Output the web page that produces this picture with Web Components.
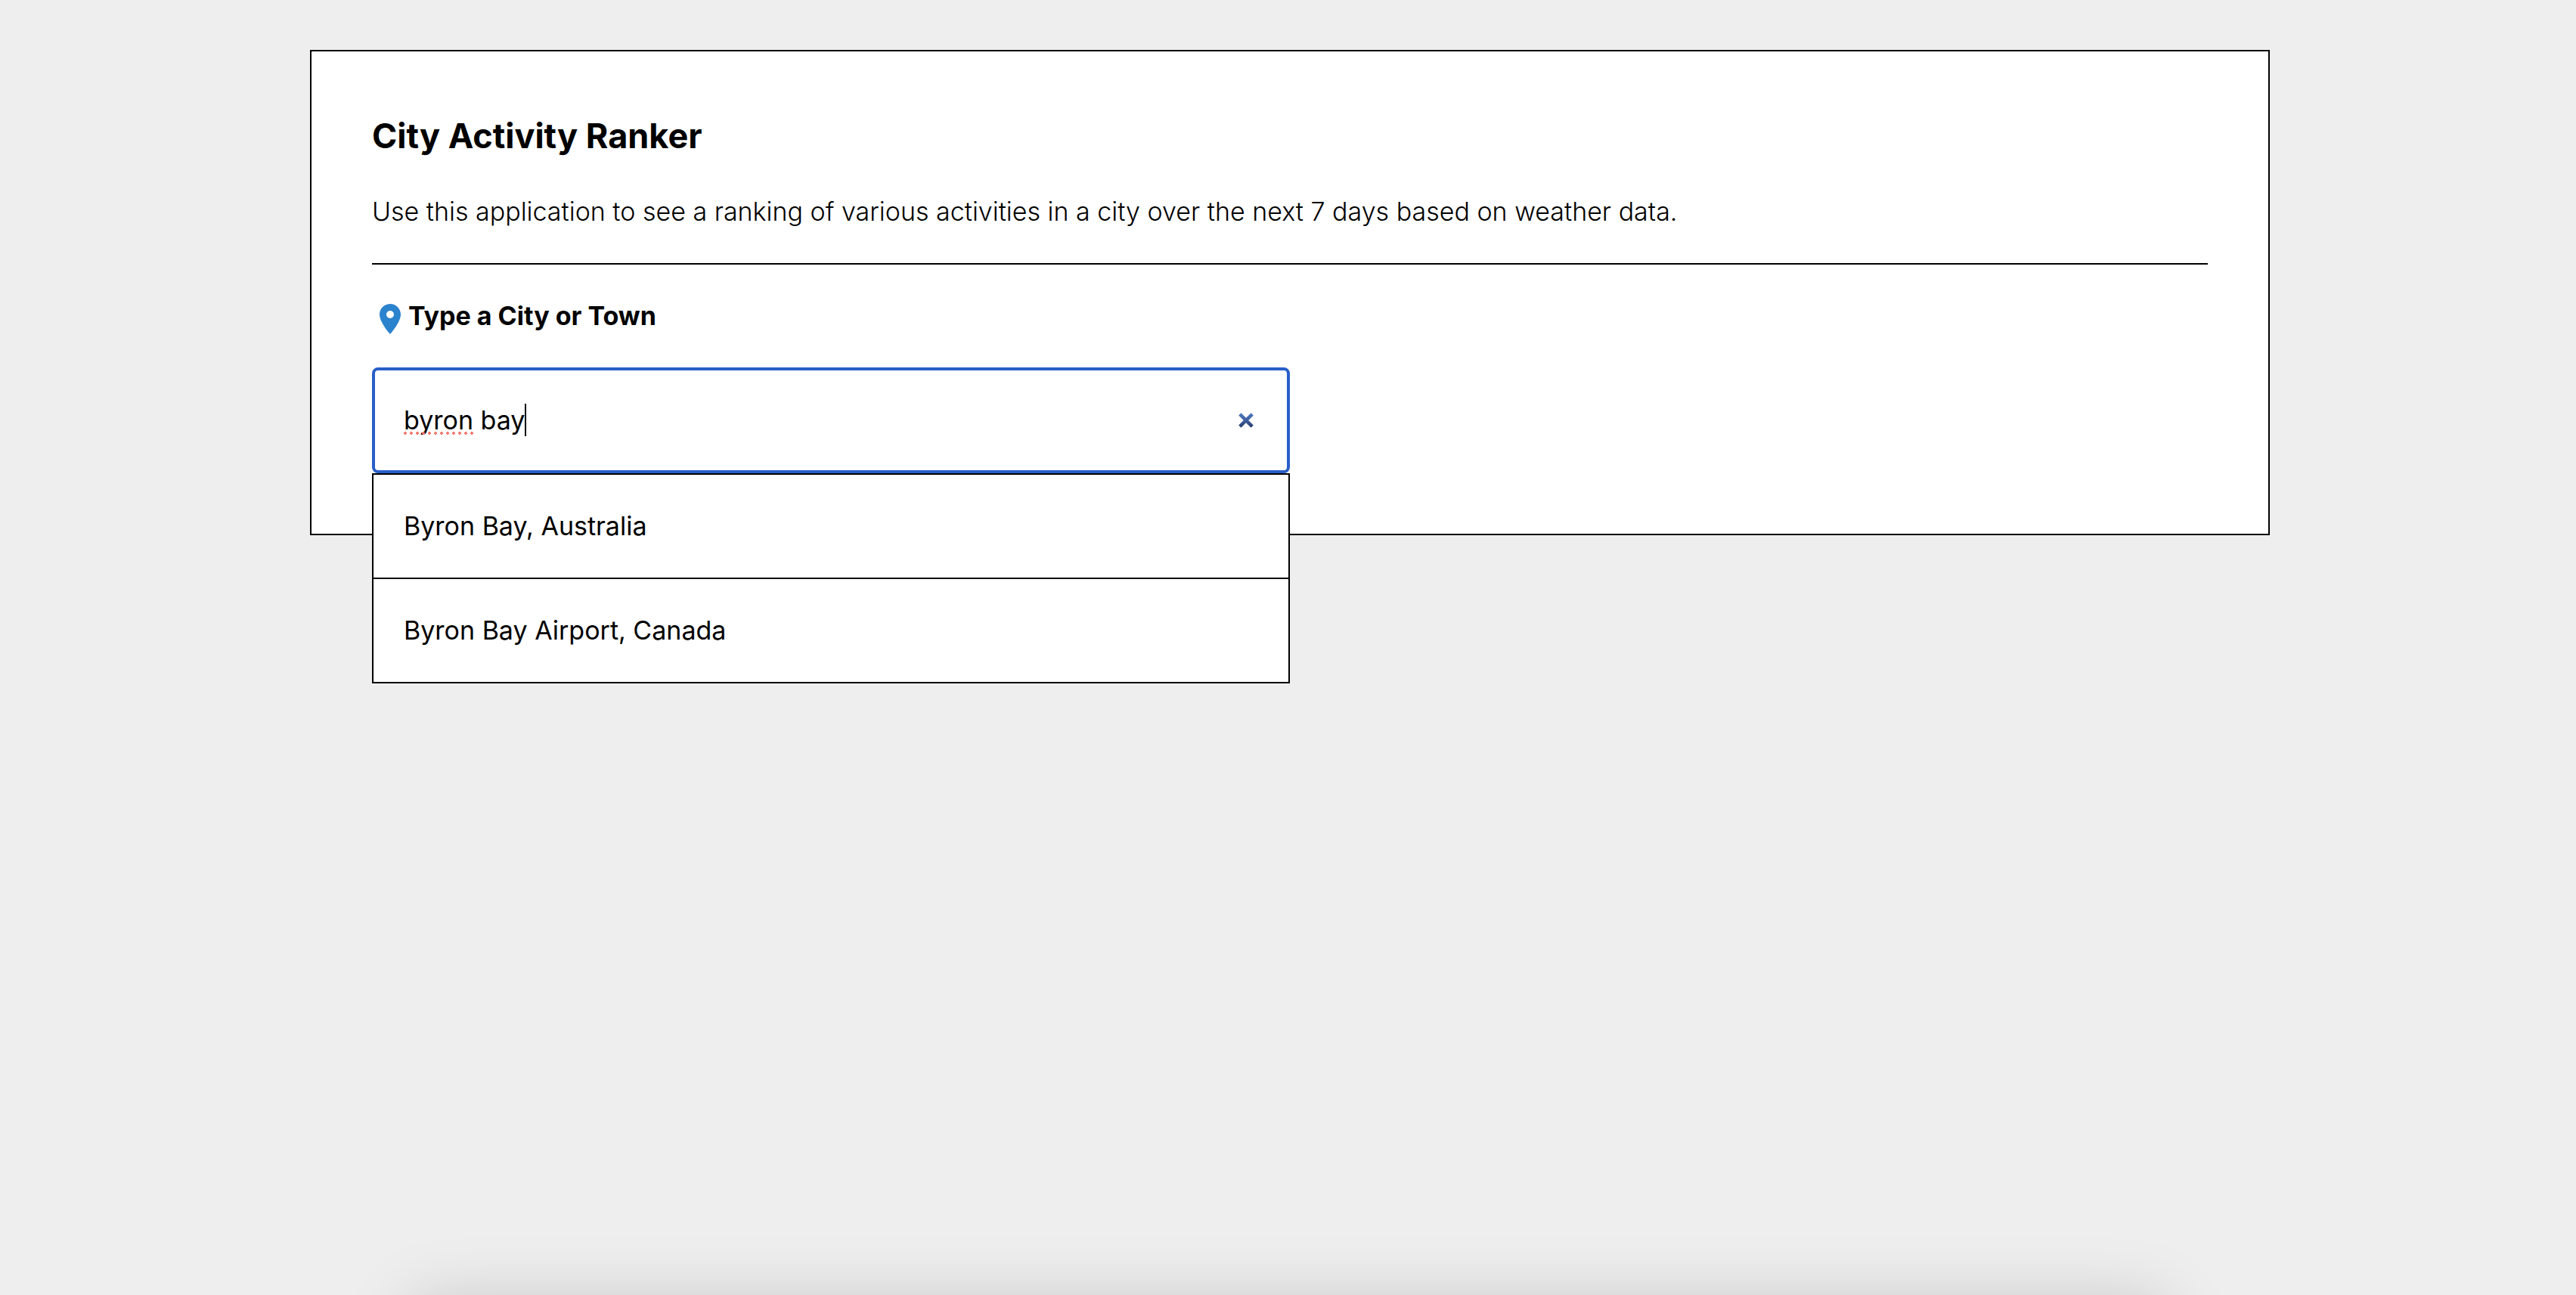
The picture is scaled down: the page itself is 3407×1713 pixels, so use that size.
<!DOCTYPE html>
<html lang="en">
<head>
<meta charset="utf-8">
<title>City Activity Ranker</title>
<style>
  :root {
    --ink: #000;
    --surface: #fff;
    --page: #eee;
    --accent: #285ec8;
    --pin: #2b82cd;
    --space: 40px;
    --line: 56px;
    --text: 34px;
  }
  body {
    margin: 0;
    min-height: 100vh;
    background: var(--page);
    color: var(--ink);
    font-family: Inter, "Liberation Sans", sans-serif;
    font-size: var(--text);
    line-height: var(--line);
  }
</style>
</head>
<body>
<ranker-page>
  <ranker-card heading="City Activity Ranker">
    <span slot="intro">Use this application to see a ranking of various activities in a city over the next 7 days based on weather data.</span>
    <city-search label="Type a City or Town" value="byron bay" unknown="byron">
      <city-option>Byron Bay, Australia</city-option>
      <city-option>Byron Bay Airport, Canada</city-option>
    </city-search>
  </ranker-card>
</ranker-page>

<script>
class RankerPage extends HTMLElement {
  constructor() {
    super();
    this.attachShadow({ mode: 'open' }).innerHTML = `
      <style>
        :host { display: block; box-sizing: border-box; min-height: 100vh; padding: 66px 0 var(--space) 5px; }
        main { display: block; max-width: 2592px; margin: 0 auto; }
        .shade {
          position: fixed; top: 100%; left: 16%; right: 16%; height: 200px;
          box-shadow: 0 12px 90px rgba(0, 0, 0, .18);
          pointer-events: none;
        }
      </style>
      <main><slot></slot></main>
      <div class="shade"></div>`;
  }
}

class RankerCard extends HTMLElement {
  constructor() {
    super();
    this.attachShadow({ mode: 'open' }).innerHTML = `
      <style>
        :host {
          display: flex; flex-direction: column; gap: var(--space);
          box-sizing: border-box; padding: 80px;
          background: var(--surface); border: 2px solid var(--ink);
        }
        h1 { margin: 0; font-size: 45px; line-height: 64px; font-weight: 700; }
        p { margin: 0; font-weight: 300; }
        hr { width: 100%; margin: 0; border: 0; border-top: 2px solid var(--ink); }
      </style>
      <h1></h1>
      <p><slot name="intro"></slot></p>
      <hr>
      <slot></slot>`;
    this.shadowRoot.querySelector('h1').textContent = this.getAttribute('heading');
  }
}

class MapPin extends HTMLElement {
  constructor() {
    super();
    this.attachShadow({ mode: 'open' }).innerHTML = `
      <style>
        :host { display: block; width: 48px; height: 48px; color: var(--pin); }
        svg { display: block; width: 100%; height: 100%; }
      </style>
      <svg viewBox="0 0 24 24" fill="currentColor" aria-hidden="true">
        <path d="M12 2C8.13 2 5 5.13 5 9c0 5.25 7 13 7 13s7-7.75 7-13c0-3.87-3.13-7-7-7zm0 9.5a2.5 2.5 0 0 1 0-5 2.5 2.5 0 0 1 0 5z"/>
      </svg>`;
  }
}

class CitySearch extends HTMLElement {
  constructor() {
    super();
    this.attachShadow({ mode: 'open' }).innerHTML = `
      <style>
        :host { display: flex; flex-direction: column; gap: var(--space); }
        .label { display: flex; align-items: flex-end; font-weight: 700; }
        .combo { position: relative; width: 50%; }
        .field {
          display: flex; align-items: center; box-sizing: border-box;
          height: 140px; padding: 0 38px;
          background: var(--surface); border: 4px solid var(--accent); border-radius: 8px;
        }
        .entry { position: relative; flex: 1; display: flex; }
        input {
          flex: 1; min-width: 0; height: var(--line); padding: 0; border: 0; outline: 0;
          background: none; color: inherit; font: inherit; caret-color: transparent;
        }
        .typo {
          position: absolute; left: 0; top: 43px; height: 4px;
          background: radial-gradient(circle at 2px 2px, #f4776c 2px, transparent 2px) 0 0 / 8px 4px;
        }
        .caret { position: absolute; top: 6px; width: 2px; height: 43px; background: var(--ink); }
        button {
          display: flex; align-items: center; justify-content: center;
          width: 32px; height: 32px; padding: 0; border: 0; background: none;
        }
        button svg { width: 20px; height: 20px; }
        .options {
          position: absolute; top: 100%; left: 0; right: 0; z-index: 1;
          background: var(--surface); border: 2px solid var(--ink);
        }
      </style>
      <label class="label" for="city"><map-pin></map-pin><span></span></label>
      <div class="combo">
        <div class="field">
          <div class="entry">
            <input id="city" type="text" autocomplete="off" spellcheck="false">
            <i class="typo"></i><i class="caret"></i>
          </div>
          <button type="button" aria-label="Clear">
            <svg viewBox="0 0 20 20" aria-hidden="true">
              <defs><linearGradient id="g" gradientUnits="userSpaceOnUse" x1="0" y1="0" x2="0" y2="20">
                <stop offset="0" stop-color="#4d7cc4"/><stop offset=".5" stop-color="#3f5f9f"/><stop offset="1" stop-color="#273a66"/>
              </linearGradient></defs>
              <path d="M1.8 1.8l16.4 16.4M18.2 1.8l-16.4 16.4" stroke="url(#g)" stroke-width="4.6"/>
            </svg>
          </button>
        </div>
        <div class="options" role="listbox"><slot></slot></div>
      </div>`;
    const root = this.shadowRoot;
    const value = this.getAttribute('value');
    root.querySelector('.label span').textContent = this.getAttribute('label');
    const input = root.querySelector('input');
    input.value = value;
    root.querySelector('button').addEventListener('click', () => {
      input.value = '';
      this.mark('');
    });
    input.addEventListener('input', () => this.mark(input.value));
    this.mark(value);
  }

  /* Place the caret after the typed text and dot the unknown word. */
  mark(value) {
    const pen = document.createElement('canvas').getContext('2d');
    pen.font = '34px Inter, "Liberation Sans", sans-serif';
    const word = this.getAttribute('unknown');
    const shown = value.startsWith(word) ? word : '';
    this.shadowRoot.querySelector('.caret').style.left = Math.round(pen.measureText(value).width) + 'px';
    this.shadowRoot.querySelector('.typo').style.width = Math.round(pen.measureText(shown).width) + 'px';
  }
}

class CityOption extends HTMLElement {
  constructor() {
    super();
    this.attachShadow({ mode: 'open' }).innerHTML = `
      <style>
        :host { display: block; padding: var(--space); }
        :host(:not(:first-child)) { border-top: 2px solid var(--ink); }
      </style>
      <slot></slot>`;
    this.setAttribute('role', 'option');
  }
}

customElements.define('map-pin', MapPin);
customElements.define('city-option', CityOption);
customElements.define('city-search', CitySearch);
customElements.define('ranker-card', RankerCard);
customElements.define('ranker-page', RankerPage);
</script>
</body>
</html>
